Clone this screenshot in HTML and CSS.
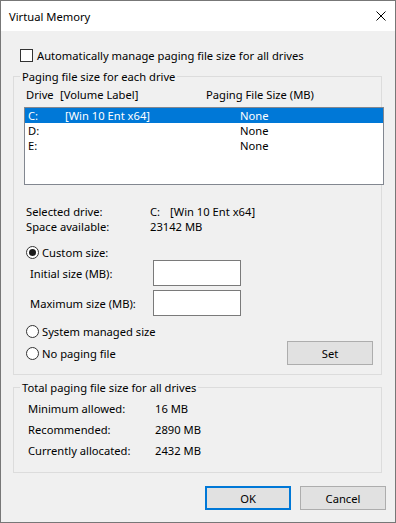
FILE: index.html
```html
<!DOCTYPE html>
<html>
<head>
<meta charset="utf-8">
<title>Virtual Memory</title>
<link rel="stylesheet" href="styles.css">
</head>
<body>
<div class="window">
  <div class="titlebar">
    <span class="title">Virtual Memory</span>
    <svg class="close" width="10" height="10" viewBox="0 0 10 10"><path d="M0.5 0.5L9.5 9.5M9.5 0.5L0.5 9.5" stroke="#000" stroke-width="1" fill="none"/></svg>
  </div>
  <div class="content">
    <div class="check-row"><span class="checkbox"></span><span>Automatically manage paging file size for all drives</span></div>

    <div class="group group-drives">
      <div class="group-title">Paging file size for each drive</div>
      <div class="list-header"><span class="h-drive">Drive</span><span class="h-label">[Volume Label]</span><span>Paging File Size (MB)</span></div>
      <div class="listbox">
        <div class="lrow selected"><span class="c-drive">C:</span><span class="c-label">[Win 10 Ent x64]</span><span>None</span></div>
        <div class="lrow"><span class="c-drive">D:</span><span class="c-label"></span><span>None</span></div>
        <div class="lrow"><span class="c-drive">E:</span><span class="c-label"></span><span>None</span></div>
      </div>
      <div class="info">
        <div class="info-row"><span class="info-key">Selected drive:</span><span>C:<span class="sp"></span>[Win 10 Ent x64]</span></div>
        <div class="info-row"><span class="info-key">Space available:</span><span>23142 MB</span></div>
      </div>
      <div class="radio-row first"><span class="radio on"></span><span>Custom size:</span></div>
      <div class="size-row"><span class="size-label">Initial size (MB):</span><span class="textbox"></span></div>
      <div class="size-row second"><span class="size-label">Maximum size (MB):</span><span class="textbox"></span></div>
      <div class="radio-row sys"><span class="radio"></span><span>System managed size</span></div>
      <div class="radio-row nopage"><span class="radio"></span><span>No paging file</span><span class="btn set-btn">Set</span></div>
    </div>

    <div class="group group-total">
      <div class="group-title">Total paging file size for all drives</div>
      <div class="totals">
        <div class="t-row"><span class="t-key">Minimum allowed:</span><span>16 MB</span></div>
        <div class="t-row"><span class="t-key">Recommended:</span><span>2890 MB</span></div>
        <div class="t-row"><span class="t-key">Currently allocated:</span><span>2432 MB</span></div>
      </div>
    </div>

    <div class="buttons">
      <span class="btn default">OK</span>
      <span class="btn">Cancel</span>
    </div>
  </div>
</div>
</body>
</html>
```
FILE: styles.css
```css
* { box-sizing: border-box; }
html, body { margin: 0; padding: 0; }
body {
  font-family: "Noto Sans", "Open Sans", sans-serif;
  font-size: 11.2px;
  line-height: 15px;
  color: #000;
  background: #f0f0f0;
}
.window {
  width: 396px;
  height: 523px;
  border: 1px solid #777;
  background: #f0f0f0;
  display: flex;
  flex-direction: column;
}
.titlebar {
  height: 30px;
  background: #fff;
  display: flex;
  align-items: center;
  padding-left: 8px;
}
.title { flex: 1; }
.close { margin-right: 9px; display: block; }
.content {
  padding-top: 18px;
  display: flex;
  flex-direction: column;
}
.check-row {
  display: flex;
  align-items: center;
  height: 13px;
  margin-left: 19px;
}
.checkbox {
  width: 13px;
  height: 13px;
  border: 1px solid #333;
  background: #fff;
  margin-right: 4px;
  flex: none;
}
.group {
  width: 369px;
  margin-left: 12px;
  border: 1px solid #dcdcdc;
  display: flex;
  flex-direction: column;
}
.group-drives { margin-top: 14px; padding-bottom: 9px; }
.group-total { margin-top: 12px; padding-bottom: 14px; }
.group-title {
  margin: -8px 0 0 6px;
  padding: 0 2px;
  background: #f0f0f0;
  align-self: flex-start;
}
.list-header {
  margin-top: 3px;
  padding-left: 12px;
  display: flex;
}
.h-drive { width: 34px; }
.h-label { width: 146px; }
.listbox {
  margin-top: 5px;
  margin-left: 10px;
  width: 360px;
  height: 78px;
  border: 1px solid #828790;
  background: #fff;
  flex: none;
}
.lrow {
  display: flex;
  height: 15px;
  padding-left: 3px;
}
.lrow.selected { background: #0078d7; color: #fff; }
.c-drive { width: 37px; }
.c-label { width: 175px; }
.info { margin-top: 19px; padding-left: 12px; }
.info-row { display: flex; }
.info-key { width: 124px; }
.sp { display: inline-block; width: 10px; }
.radio-row {
  display: flex;
  align-items: center;
  padding-left: 12px;
  height: 15px;
}
.radio-row.first { margin-top: 11px; }
.radio-row.sys { margin-top: 8px; }
.radio-row.nopage { margin-top: 2px; height: 24px; }
.radio {
  width: 13px;
  height: 13px;
  border: 1px solid #333;
  border-radius: 50%;
  background: #fff;
  margin-right: 3px;
  flex: none;
  display: flex;
  align-items: center;
  justify-content: center;
}
.radio.on::after {
  content: "";
  width: 7px;
  height: 7px;
  border-radius: 50%;
  background: #1a1a1a;
}
.size-row {
  display: flex;
  align-items: center;
  height: 26px;
  padding-left: 16px;
}
.size-row.second { margin-top: 4px; }
.size-label { width: 123px; }
.textbox {
  width: 88px;
  height: 26px;
  border: 1px solid #7a7a7a;
  background: #fff;
}
.btn {
  width: 86px;
  height: 24px;
  border: 1px solid #adadad;
  background: #e1e1e1;
  display: flex;
  align-items: center;
  justify-content: center;
  flex: none;
}
.set-btn { margin-left: auto; margin-right: 8px; }
.totals {
  margin-top: 6px;
  padding-left: 14px;
  display: flex;
  flex-direction: column;
  gap: 6px;
}
.t-row { display: flex; }
.t-key { width: 127px; }
.buttons {
  margin-top: 13px;
  display: flex;
  justify-content: flex-end;
  gap: 9px;
  padding-right: 9px;
}
.btn.default { border: 2px solid #0078d7; }
```
